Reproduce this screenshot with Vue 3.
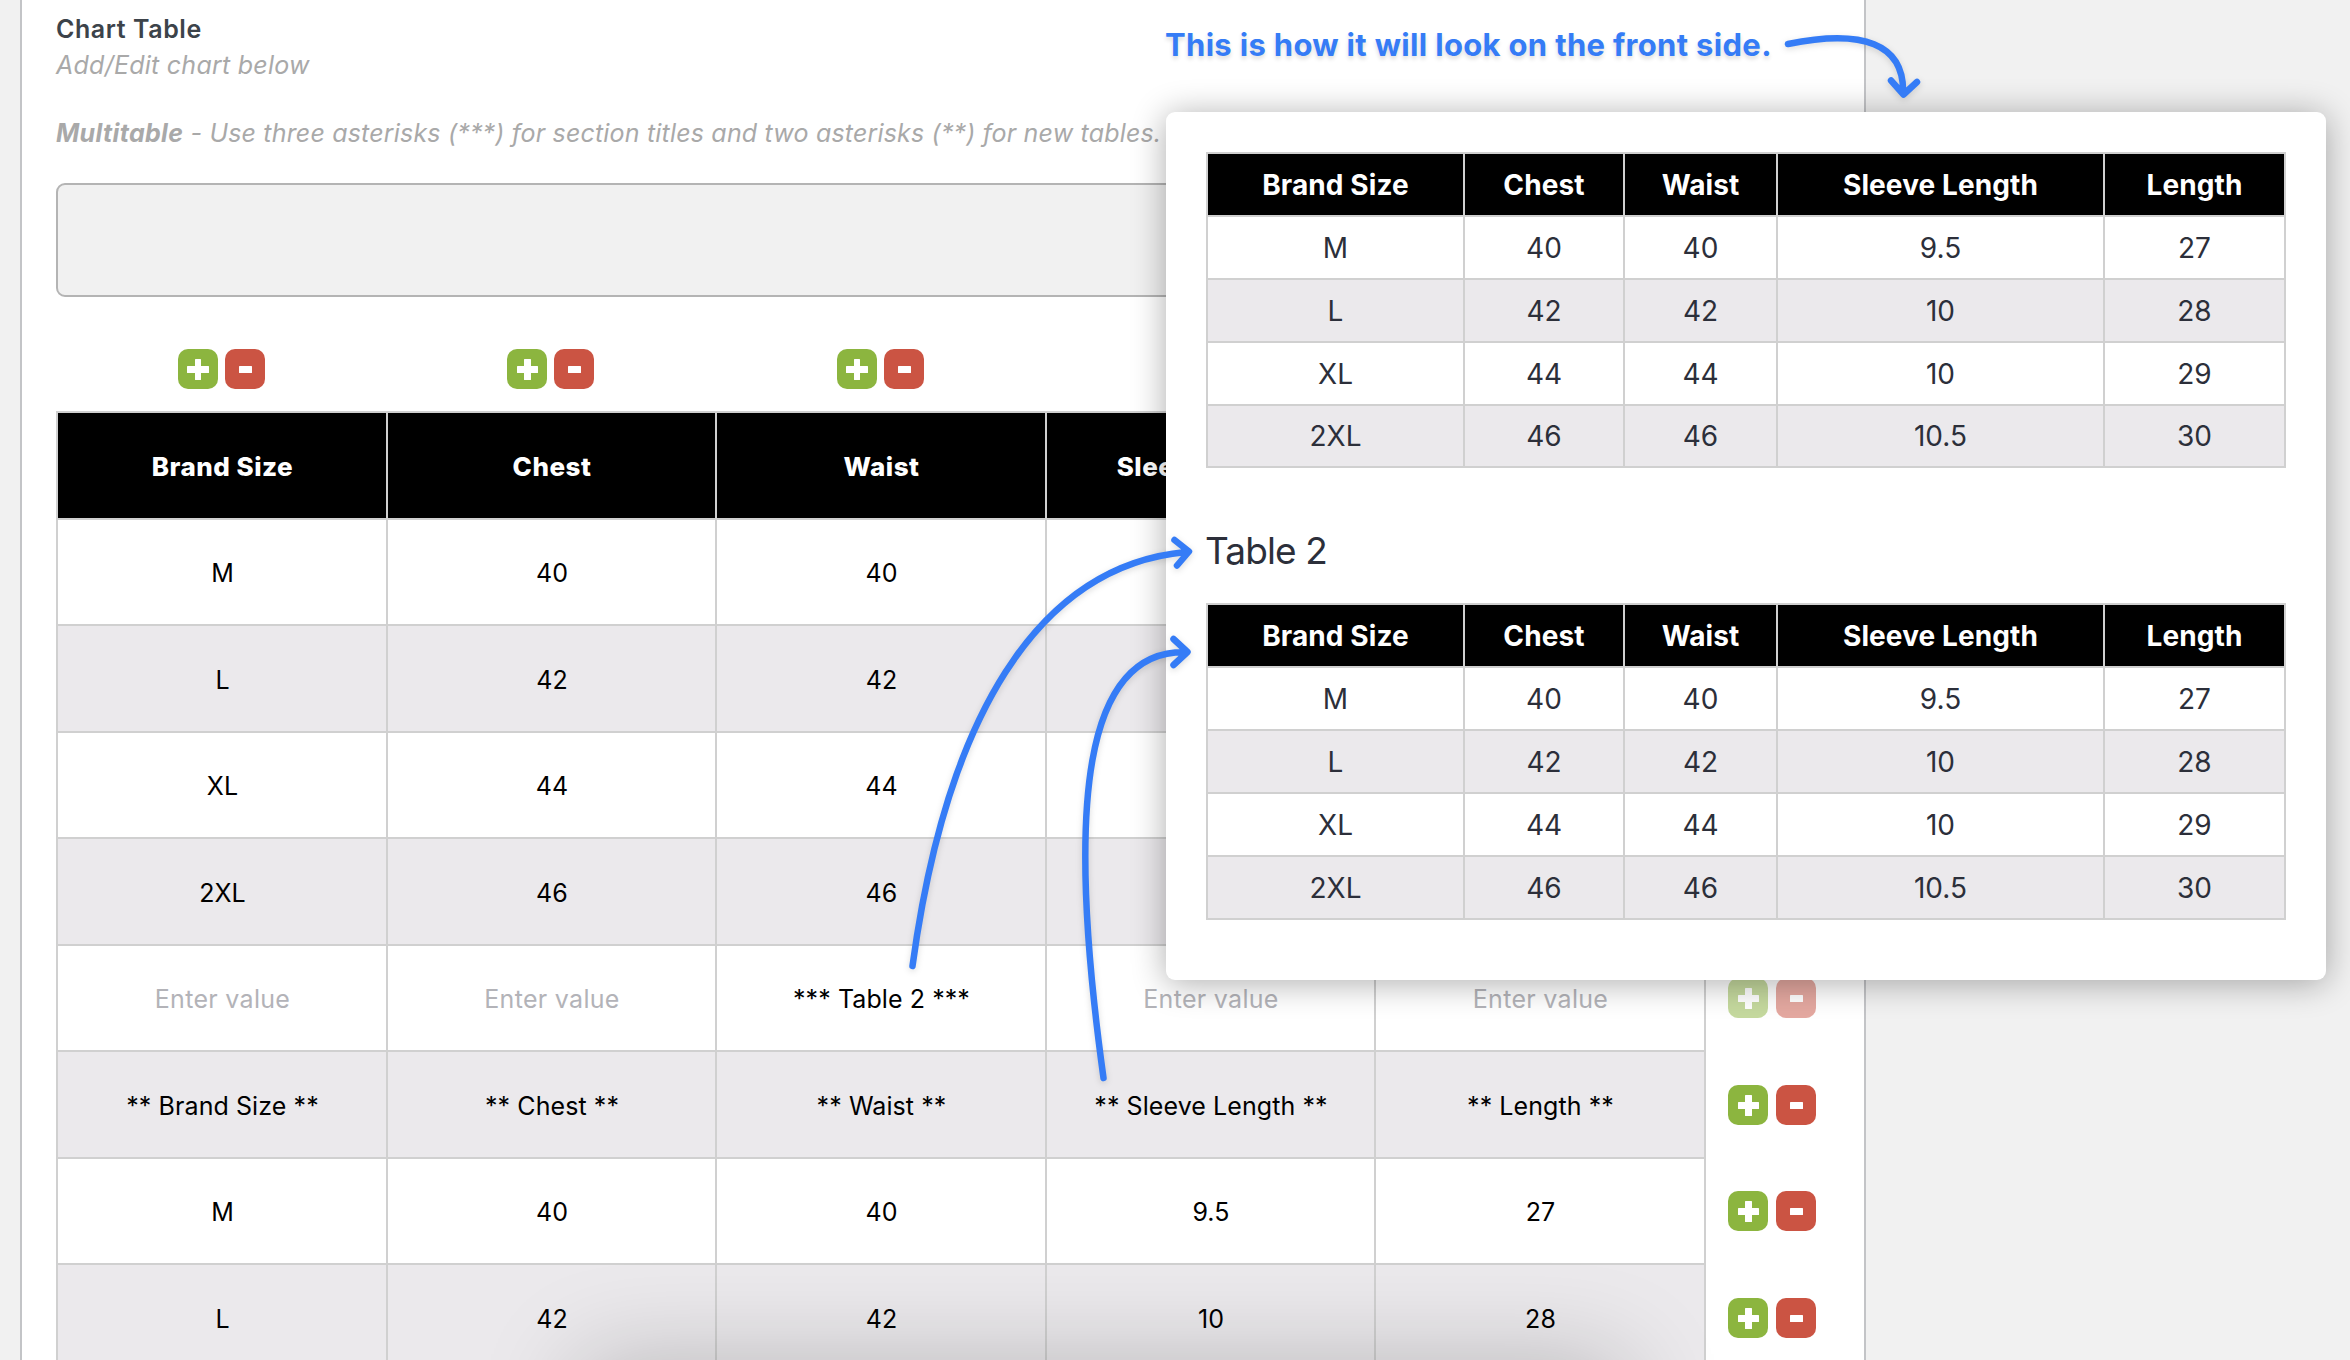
<script setup>
const headers = ['Brand Size', 'Chest', 'Waist', 'Sleeve Length', 'Length']

const sizes = [
  ['M', '40', '40', '9.5', '27'],
  ['L', '42', '42', '10', '28'],
  ['XL', '44', '44', '10', '29'],
  ['2XL', '46', '46', '10.5', '30']
]

// null marks a cell that lies behind the preview card
const editorRows = [
  { head: true, cells: [...headers.slice(0, 4), null] },
  ...sizes.map((cells) => ({ cells: [...cells.slice(0, 3), null, null] })),
  { cells: ['', '', '*** Table 2 ***', '', ''], faded: true },
  { cells: headers.map((h) => `** ${h} **`) },
  ...sizes.slice(0, 2).map((cells) => ({ cells }))
]

const previews = [
  { title: '', rows: sizes },
  { title: 'Table 2', rows: sizes }
]
</script>

<template>
  <div class="page">
    <section class="panel">
      <h2 class="title">Chart Table</h2>
      <p class="hint">Add/Edit chart below</p>
      <p class="hint multi"><b>Multitable</b> - Use three asterisks (***) for section titles and two asterisks (**) for new tables.</p>
      <div class="toolbar"></div>

      <div class="grid-line column-actions">
        <div v-for="h in headers" :key="h" class="actions">
          <button class="btn add"></button>
          <button class="btn remove"></button>
        </div>
      </div>

      <div class="editor">
        <div v-for="(row, r) in editorRows" :key="r" class="editor-row">
          <div class="grid-line cells" :class="{ head: row.head, alt: !row.head && r % 2 === 0 }">
            <div v-for="(cell, i) in row.cells" :key="i" class="cell">
              <span v-if="cell">{{ cell }}</span>
              <span v-else-if="cell === ''" class="placeholder">Enter value</span>
            </div>
          </div>
          <div class="actions row-actions" :class="{ faded: row.faded }">
            <button class="btn add"></button>
            <button class="btn remove"></button>
          </div>
        </div>
      </div>
    </section>

    <div class="bottom-shade"></div>

    <aside class="preview">
      <template v-for="(p, k) in previews" :key="k">
        <h3 v-if="p.title">{{ p.title }}</h3>
        <div class="sheet" :class="{ compact: k === 0 }">
          <div class="sheet-row head">
            <div v-for="h in headers" :key="h">{{ h }}</div>
          </div>
          <div v-for="(row, r) in p.rows" :key="r" class="sheet-row" :class="{ alt: r % 2 === 1 }">
            <div v-for="(cell, i) in row" :key="i">{{ cell }}</div>
          </div>
        </div>
      </template>
    </aside>

    <p class="note">This is how it will look on the front side.</p>
    <svg class="arrows" width="2350" height="1360" viewBox="0 0 2350 1360">
      <path d="M1788 44C1862 29 1905 43 1903 94M1891 80.500L1903.500 94.500L1917 82" />
      <path d="M912.500 966C946 720 1036 566 1186 552M1174.500 540L1189 551.500L1177 565.500" />
      <path d="M1103.500 1078C1065 800 1085 650 1186 652M1173.500 639L1187.500 652L1173.500 665" />
    </svg>
  </div>
</template>

<style>
body { margin: 0; }
</style>

<style scoped>
* { box-sizing: border-box; }

.page {
  position: relative;
  width: 2350px;
  height: 1360px;
  overflow: hidden;
  background: #f1f1f1;
  font-family: Inter, "Liberation Sans", sans-serif;
}

.panel {
  width: 1846px;
  height: 1500px;
  margin-left: 20px;
  padding: 11px 34px 0;
  background: #fff;
  border: solid #c3c4c7;
  border-width: 0 2px;
}

.title {
  margin: 0;
  font-size: 25px;
  font-weight: 600;
  line-height: 36px;
  letter-spacing: 0.57px;
  color: #3c434a;
}

.hint {
  margin: 0;
  font-size: 25px;
  font-style: italic;
  line-height: 36px;
  letter-spacing: 0.25px;
  color: #a9a9a9;
  white-space: nowrap;
}

.multi { margin-top: 32px; letter-spacing: 0.18px; }
.multi b { font-weight: 700; letter-spacing: 0.33px; }

.toolbar {
  height: 114px;
  margin: 32px 34px 52px 0;
  background: #f1f1f1;
  border: 2px solid #b4b4b4;
  border-radius: 9px;
}

.grid-line {
  display: grid;
  grid-template-columns: 330px 329px 330px 329px 330px;
}

.column-actions { margin-bottom: 22px; }

.actions { display: flex; justify-content: center; align-items: center; gap: 7px; }
.row-actions { margin-left: 22px; gap: 8px; padding-bottom: 2px; }
.faded { opacity: 0.5; }

.btn {
  position: relative;
  flex: none;
  width: 40px;
  height: 40px;
  padding: 0;
  border: 0;
  border-radius: 10px;
}

.add { background: #8cb53f; }
.remove { background: #cb5443; }

.btn::before,
.add::after { content: ""; position: absolute; background: #fff; border-radius: 0.5px; }
.add::before { left: 9.5px; top: 17px; width: 21.5px; height: 7px; }
.add::after { left: 17px; top: 10px; width: 6.5px; height: 21px; }
.remove::before { left: 14px; top: 17px; width: 13px; height: 7px; }

.editor-row { display: flex; height: 107px; }
.editor-row:nth-child(even) { height: 106px; }
.editor-row:first-child { height: 109px; }

.cells { border-left: 2px solid #d0d0d0; font-size: 25px; letter-spacing: 0.08px; color: #000; }
.editor-row:first-child .cells { border-top: 2px solid #d0d0d0; }

.cell {
  display: flex;
  align-items: center;
  justify-content: center;
  padding: 2px 0 0 1px;
  border: solid #d0d0d0;
  border-width: 0 2px 2px 0;
  white-space: nowrap;
}

.cells.head { background: #000; color: #fff; font-size: 26px; font-weight: 800; letter-spacing: 0.5px; }
.cells.alt { background: #ebe9ec; }
.placeholder { color: #b3b3b8; letter-spacing: 0.3px; }

.bottom-shade {
  position: absolute;
  left: 580px;
  top: 1362px;
  width: 1045px;
  height: 300px;
  box-shadow: 0 0 100px rgba(0, 0, 0, 0.22);
}

.preview {
  position: absolute;
  left: 1166px;
  top: 112px;
  width: 1160px;
  height: 868px;
  padding: 40px;
  background: #fff;
  border-radius: 9px;
  box-shadow: 0 3px 34px rgba(0, 0, 0, 0.33);
  color: #2c2f3a;
}

.preview h3 {
  margin: 53px 0 22px;
  font-size: 37px;
  font-weight: 400;
  line-height: 60px;
  letter-spacing: -0.9px;
  text-indent: -1px;
}

.sheet { border: solid #d0d0d0; border-width: 2px 0 0 2px; font-size: 28px; }

.sheet-row {
  display: grid;
  grid-template-columns: 257px 160px 153px 327px 181px;
  height: 63px;
}

.sheet.compact .sheet-row:last-child { height: 62px; }

.sheet-row > div {
  display: flex;
  align-items: center;
  justify-content: center;
  border: solid #d0d0d0;
  border-width: 0 2px 2px 0;
}

.sheet-row.head { background: #000; color: #fff; font-weight: 700; letter-spacing: 0.1px; }
.sheet-row.alt { background: #ebe9ec; }

.note {
  position: absolute;
  left: 1165px;
  top: 24px;
  margin: 0;
  font-size: 31px;
  font-weight: 700;
  line-height: 41px;
  letter-spacing: 0.32px;
  color: #357cf6;
  white-space: nowrap;
  text-shadow: 0 3px 4px rgba(0, 0, 0, 0.14);
}

.arrows { position: absolute; left: 0; top: 0; filter: drop-shadow(0 2px 3px rgba(0, 0, 0, 0.14)); }

.arrows path {
  fill: none;
  stroke: #357cf6;
  stroke-width: 6.5;
  stroke-linecap: round;
  stroke-linejoin: round;
}
</style>
